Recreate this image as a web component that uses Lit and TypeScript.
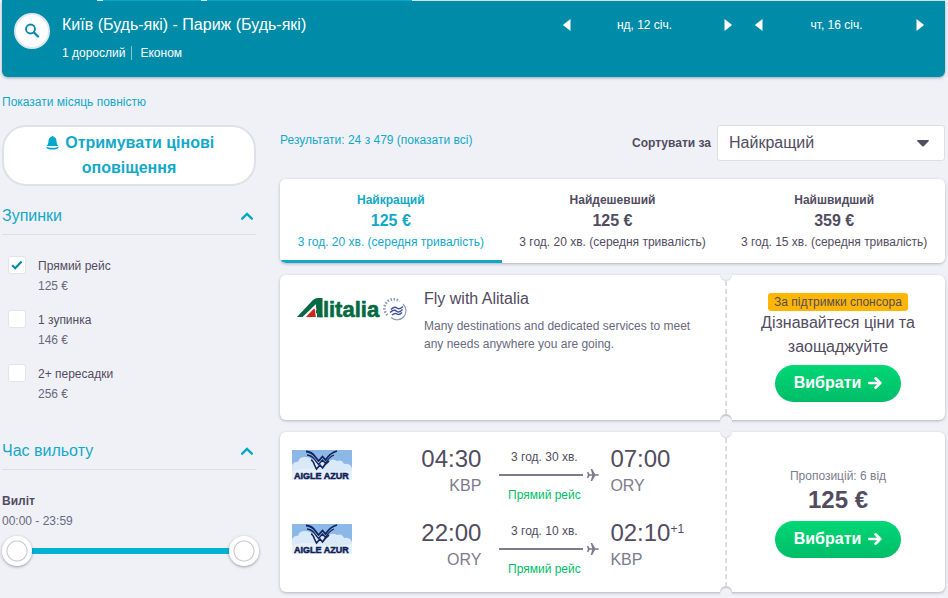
import { LitElement, html, css, svg } from "lit";
import { customElement, property, state } from "lit/decorators.js";
import { classMap } from "lit/directives/class-map.js";

const base = css`
  :host {
    display: block;
    box-sizing: border-box;
    font-family: "Liberation Sans", Arial, sans-serif;
    font-size: 12px;
    line-height: 20px;
    color: #524c61;
  }
  *,
  *::before,
  *::after {
    box-sizing: border-box;
  }
  h1,
  h2,
  h3,
  p {
    margin: 0;
    font-weight: normal;
  }
  button {
    font: inherit;
    color: inherit;
    margin: 0;
    padding: 0;
    border: 0;
    background: none;
    cursor: pointer;
  }
  a {
    color: #12a9c9;
    text-decoration: none;
  }
  svg {
    display: block;
  }
`;

@customElement("date-stepper")
class DateStepper extends LitElement {
  @property() label = "";

  static styles = [
    base,
    css`
      :host {
        flex: 0 1 181px;
        color: #fff;
      }
      .row {
        display: flex;
        align-items: center;
        justify-content: space-between;
      }
      .date {
        padding-right: 6px;
      }
      .step {
        display: grid;
        place-items: center;
        width: 20px;
        height: 20px;
      }
    `,
  ];

  render() {
    return html`<div class="row">
      <button class="step" aria-label="Попередній день">
        <svg width="8" height="12" viewBox="0 0 8 12" fill="#fff"><path d="M7.5 0v12L.5 6.600q-.6-.6 0-1.200z" /></svg>
      </button>
      <span class="date">${this.label}</span>
      <button class="step" aria-label="Наступний день">
        <svg width="8" height="12" viewBox="0 0 8 12" fill="#fff"><path d="M.5 0v12l7-5.400q.6-.6 0-1.200z" /></svg>
      </button>
    </div>`;
  }
}

@customElement("search-header")
class SearchHeader extends LitElement {
  static styles = [
    base,
    css`
      :host {
        color: #fff;
      }
      .strip {
        display: flex;
        gap: 6px;
        height: 1px;
        background: #d5eff4;
      }
      .tab {
        background: #00a9c6;
      }
      .tab.current {
        background: #008ca8;
        width: 95px;
      }
      .tab.short {
        width: 98px;
      }
      .tab.long {
        width: 205px;
      }
      .bar {
        display: flex;
        align-items: flex-start;
        min-height: 76px;
        padding: 12px 15px 12px 12px;
        border-radius: 0 0 6px 6px;
        background: #008ca8;
        box-shadow: 0 1px 3px rgba(0, 60, 80, 0.4);
      }
      .search {
        display: grid;
        place-items: center;
        flex: none;
        width: 36px;
        height: 36px;
        border: 2px solid #dfe6ee;
        border-radius: 50%;
        background: #fff;
      }
      .summary {
        flex: 1;
        min-width: 0;
        padding-left: 12px;
      }
      h1 {
        font-size: 16px;
        line-height: 24px;
      }
      .details {
        display: flex;
        margin-top: 9px;
        line-height: 14px;
      }
      .details span + span {
        margin-left: 6px;
        padding-left: 8px;
        border-left: 1px solid #7fc5d3;
      }
      .dates {
        display: flex;
        flex: 0 1 373px;
        gap: 11px;
        padding-top: 2px;
      }
    `,
  ];

  render() {
    return html`
      <div class="strip">
        <div class="tab current"></div>
        <div class="tab short"></div>
        <div class="tab long"></div>
      </div>
      <header class="bar">
        <button class="search" aria-label="Шукати">
          <svg width="16" height="16" viewBox="0 0 16 16" fill="none" stroke="#008ca8">
            <circle cx="6.500" cy="6" r="4.500" stroke-width="1.800" />
            <path d="M10 9.500l4 4" stroke-width="2.400" stroke-linecap="round" />
          </svg>
        </button>
        <div class="summary">
          <h1>Київ (Будь-які) - Париж (Будь-які)</h1>
          <div class="details"><span>1 дорослий</span><span>Економ</span></div>
        </div>
        <div class="dates">
          <date-stepper label="нд, 12 січ."></date-stepper>
          <date-stepper label="чт, 16 січ."></date-stepper>
        </div>
      </header>
    `;
  }
}

@customElement("filter-section")
class FilterSection extends LitElement {
  @property() heading = "";
  @state() private open = true;

  static styles = [
    base,
    css`
      .toggle {
        display: flex;
        align-items: center;
        justify-content: space-between;
        width: 100%;
        padding: 0 3px 6px 0;
        border-bottom: 1px solid #dddde5;
        font-size: 16px;
        line-height: 24px;
        color: #12a9c9;
        text-align: left;
      }
      .closed svg {
        transform: rotate(180deg);
      }
    `,
  ];

  render() {
    return html`
      <h2>
        <button
          class=${classMap({ toggle: true, closed: !this.open })}
          aria-expanded=${this.open}
          @click=${() => (this.open = !this.open)}
        >
          ${this.heading}
          <svg width="12" height="8" viewBox="0 0 12 8" fill="none" stroke="#00a9c9" stroke-width="2.400">
            <path d="M1.200 6.700L6 2l4.800 4.700" stroke-linecap="round" />
          </svg>
        </button>
      </h2>
      ${this.open ? html`<slot></slot>` : ""}
    `;
  }
}

const stops = [
  { id: "direct", label: "Прямий рейс", price: "125 €", checked: true },
  { id: "one", label: "1 зупинка", price: "146 €", checked: false },
  { id: "more", label: "2+ пересадки", price: "256 €", checked: false },
];

@customElement("filter-panel")
class FilterPanel extends LitElement {
  static styles = [
    base,
    css`
      .alert {
        width: 100%;
        padding: 3px 24px 4px;
        border: 2px solid #e0e0e9;
        border-radius: 24px;
        background: #fff;
        font-size: 16px;
        font-weight: bold;
        line-height: 25px;
        color: #12a9c9;
      }
      .alert svg {
        display: inline-block;
        vertical-align: -2px;
        margin: 0 2px;
      }
      .stops {
        margin-top: 18px;
      }
      .times {
        margin-top: 35px;
      }
      .options {
        display: grid;
        gap: 14px;
        padding: 21px 0 0 6px;
      }
      .option {
        display: grid;
        grid-template-columns: 18px 1fr;
        column-gap: 12px;
      }
      .box {
        display: grid;
        place-items: center;
        width: 18px;
        height: 18px;
      }
      .box > * {
        grid-area: 1 / 1;
      }
      .box input {
        appearance: none;
        width: 18px;
        height: 18px;
        margin: 0;
        border: 1px solid #e2e2ea;
        border-radius: 3px;
        background: #fff;
      }
      .box svg {
        visibility: hidden;
        pointer-events: none;
        z-index: 1;
      }
      .box input:checked + svg {
        visibility: visible;
      }
      .price,
      .hours {
        color: #68697f;
      }
      h3 {
        padding-top: 21px;
        font-size: 12px;
        font-weight: bold;
      }
      .slider {
        position: relative;
        display: grid;
        align-items: center;
        height: 30px;
        margin: 5px -3px 0 0;
      }
      .track {
        height: 6px;
        margin: 0 15px;
        background: #00b2d6;
      }
      .slider input {
        position: absolute;
        inset: 0;
        appearance: none;
        width: 100%;
        height: 30px;
        margin: 0;
        background: none;
        pointer-events: none;
      }
      .slider input::-webkit-slider-thumb {
        appearance: none;
        width: 30px;
        height: 30px;
        border-radius: 50%;
        background: radial-gradient(circle, #fff 9px, #c4c4cf 10px, #fff 11px);
        box-shadow: 0 1px 3px rgba(60, 60, 80, 0.5);
        pointer-events: auto;
      }
    `,
  ];

  render() {
    return html`
      <button class="alert">
        <svg width="13" height="14" viewBox="0 0 13 14" fill="#00a9c9">
          <path
            d="M6.500 0q.9 0 1.100.8C9.800 1.400 10.500 3.200 10.500 5.200q0 3.200 1.900 4.800H.6Q2.500 8.400 2.500 5.200C2.500 3.200 3.200 1.400 5.400.8Q5.600 0 6.500 0z"
          />
          <path
            d="M.6 10.600c-.8 1.800 2.200 3 5.900 3s6.700-1.200 5.900-3c-.8.900-3 1.200-5.900 1.200s-5.100-.3-5.900-1.200z"
          /></svg
        >
        Отримувати цінові оповіщення
      </button>
      <filter-section class="stops" heading="Зупинки">
        <div class="options">
          ${stops.map(
            (s) => html`<div class="option">
              <span class="box">
                <input type="checkbox" id=${s.id} .checked=${s.checked} />
                <svg width="12" height="10" viewBox="0 0 12 10" fill="none" stroke="#008ca8" stroke-width="2.200">
                  <path d="M1.200 5.200l3 3L10.600 1.400" />
                </svg>
              </span>
              <label for=${s.id}>
                <div>${s.label}</div>
                <div class="price">${s.price}</div>
              </label>
            </div>`
          )}
        </div>
      </filter-section>
      <filter-section class="times" heading="Час вильоту">
        <h3>Виліт</h3>
        <p class="hours">00:00 - 23:59</p>
        <div class="slider">
          <div class="track"></div>
          <input type="range" min="0" max="1439" value="0" aria-label="Виліт від" />
          <input type="range" min="0" max="1439" value="1439" aria-label="Виліт до" />
        </div>
      </filter-section>
    `;
  }
}

const tabs = [
  { name: "Найкращий", price: "125 €", time: "3 год. 20 хв. (середня тривалість)" },
  { name: "Найдешевший", price: "125 €", time: "3 год. 20 хв. (середня тривалість)" },
  { name: "Найшвидший", price: "359 €", time: "3 год. 15 хв. (середня тривалість)" },
];

@customElement("sort-tabs")
class SortTabs extends LitElement {
  @state() private selected = 0;

  static styles = [
    base,
    css`
      :host {
        border-radius: 6px;
        box-shadow: 0 1px 3px rgba(60, 60, 80, 0.35);
      }
      .tabs {
        display: grid;
        grid-template-columns: repeat(3, 1fr);
        overflow: hidden;
        border-radius: 6px;
        background: #fff;
      }
      .tab {
        padding: 11px 0 8px;
        border-bottom: 3px solid transparent;
      }
      .tab.selected {
        border-bottom-color: #12a9c9;
        color: #12a9c9;
      }
      .tab span {
        display: block;
      }
      .name {
        font-weight: bold;
      }
      .price {
        font-size: 16px;
        font-weight: bold;
        line-height: 22px;
      }
    `,
  ];

  render() {
    return html`<div class="tabs" role="tablist">
      ${tabs.map(
        (t, i) => html`<button
          role="tab"
          aria-selected=${i === this.selected}
          class=${classMap({ tab: true, selected: i === this.selected })}
          @click=${() => (this.selected = i)}
        >
          <span class="name">${t.name}</span>
          <span class="price">${t.price}</span>
          <span>${t.time}</span>
        </button>`
      )}
    </div>`;
  }
}

@customElement("ticket-card")
class TicketCard extends LitElement {
  static styles = [
    base,
    css`
      .card {
        position: relative;
        display: grid;
        grid-template-columns: 1fr 219px;
        border-radius: 6px;
        background: #fff;
        box-shadow: 0 1px 3px rgba(60, 60, 80, 0.35);
      }
      .side {
        position: relative;
        display: flex;
        flex-direction: column;
        align-items: center;
        justify-content: center;
        padding: 18px 10px 18px 15px;
        text-align: center;
      }
      .side::before {
        content: "";
        position: absolute;
        left: -1px;
        top: 6px;
        bottom: 6px;
        width: 2px;
        background: repeating-linear-gradient(#dddde3 0 5px, transparent 5px 8px);
      }
      .notch {
        position: absolute;
        left: -6px;
        width: 12px;
        height: 7px;
        background: #f0f1f7;
      }
      .notch.top {
        top: -1px;
        border-radius: 0 0 6px 6px;
        box-shadow: inset 0 -1px 1px #dddde5;
      }
      .notch.bottom {
        bottom: -3px;
        height: 9px;
        border-radius: 6px 6px 0 0;
        box-shadow: inset 0 2px 1px #cbcbd4;
      }
      .pick {
        display: flex;
        align-items: center;
        justify-content: center;
        gap: 7px;
        width: 126px;
        height: 37px;
        padding-bottom: 2px;
        border-radius: 19px;
        background: linear-gradient(#00d775, #00bd68);
        font-size: 16px;
        font-weight: bold;
        color: #fff;
      }
    `,
  ];

  render() {
    return html`<article class="card">
      <div><slot></slot></div>
      <div class="side">
        <span class="notch top"></span>
        <span class="notch bottom"></span>
        <slot name="offer"></slot>
        <button class="pick">
          Вибрати
          <svg width="14" height="12" viewBox="0 0 14 12" fill="none" stroke="#fff" stroke-width="2.600">
            <path d="M1.300 6h10.500M7.500 1.300L12.300 6 7.500 10.700" stroke-linecap="round" stroke-linejoin="round" />
          </svg>
        </button>
      </div>
    </article>`;
  }
}

const alitaliaLogo = svg`
  <svg width="110" height="24" viewBox="0 0 110 24" role="img" aria-label="Alitalia SkyTeam">
    <text x="10" y="20" font-size="22" font-weight="bold" fill="#046a43" stroke="#046a43" stroke-width=".6"
      font-family="Liberation Sans">Alitalia</text>
    <path d="M5 20.500L19 5.500V20.500z" fill="#fff" />
    <path d="M0 20L16 3Q18 1 21 1H25.500V20.300H20V7L18.500 7.500L5.500 20z" fill="#046a43" />
    <path d="M9 20L16 12.500Q17.500 11 18 13L18.800 20z" fill="#c8281e" />
    <g fill="none" stroke="#8d97bd">
      <path d="M106 7a9 9 0 0 1-12 13.500" stroke-width="1.200" />
      <path d="M90.500 18a9 9 0 0 1 12-13.500" stroke-width="2.600" stroke-dasharray="1.500 1.600" />
      <path d="M94 12.500q3.500-3.500 6 -1.500t6-1.500M93 15.500q4-3.500 6.500-1.300t6-1.700M95 18q3-2.500 5-1t5-1.500" stroke="#41529a" stroke-width="1.500" />
    </g>
  </svg>`;

const aigleAzurLogo = svg`
  <svg width="60" height="32" viewBox="0 0 60 32" role="img" aria-label="Aigle Azur">
    <rect width="60" height="30" fill="#8cb8e8" />
    <path d="M0 15q3-4 6-3 1-5 7-5 5 0 7 3 5-2 8 2h8q4-4 9-1 5-2 7 3 6-1 8 4v12H0z" fill="#d9e9f7" />
    <path d="M0 21q14-4 28-1t32 0v10H0z" fill="#e6f0f9" />
    <g fill="none" stroke="#14245c">
      <path d="M14 1.500q6 .5 9 5l3.500 4.500 4-4.500 3 3.500Q38 3 45 1" stroke-width="1.800" />
      <path d="M15 5q5 .5 8 5l3.500 4.500 4-4.500 3 3.500Q37 7 42 5" stroke-width="1.300" />
      <path d="M19 10q2 .5 3.500 5l2 4 3.500-4 2.500 3Q33 14 37 11" stroke-width="1.600" />
    </g>
    <text x="2" y="29" font-size="9" font-weight="bold" fill="#101f58" stroke="#101f58" stroke-width=".5"
      font-family="Liberation Sans">AIGLE AZUR</text>
  </svg>`;

const legs = [
  { from: "KBP", depart: "04:30", length: "3 год. 30 хв.", to: "ORY", arrive: "07:00", shift: "" },
  { from: "ORY", depart: "22:00", length: "3 год. 10 хв.", to: "KBP", arrive: "02:10", shift: "+1" },
];

@customElement("app-root")
class AppRoot extends LitElement {
  static styles = [
    base,
    css`
      :host {
        min-height: 100vh;
        padding: 0 3px 6px 2px;
        background: #f0f1f7;
      }
      .month {
        display: block;
        padding: 15px 0 13px;
      }
      .layout {
        display: grid;
        grid-template-columns: 254px 1fr;
        gap: 24px;
        align-items: start;
      }
      .toolbar {
        display: flex;
        align-items: center;
        margin-bottom: 18px;
      }
      .found {
        flex: 1;
        padding-bottom: 6px;
      }
      .toolbar label {
        margin-right: 6px;
        font-weight: bold;
      }
      .select {
        display: grid;
        align-items: center;
        flex: 0 1 228px;
      }
      .select > * {
        grid-area: 1 / 1;
      }
      .select select {
        appearance: none;
        height: 36px;
        padding: 0 36px 0 11px;
        border: 1px solid #dddde5;
        border-radius: 3px;
        background: #fff;
        font: inherit;
        font-size: 16px;
        color: #524c61;
      }
      .select svg {
        justify-self: end;
        margin-right: 16px;
        pointer-events: none;
      }
      .results {
        display: grid;
        gap: 12px;
      }
      .ad {
        display: grid;
        grid-template-columns: 110px 1fr;
        gap: 17px;
        padding: 12px 24px 62px 17px;
      }
      .ad svg {
        margin-top: 10px;
      }
      .ad h2 {
        font-size: 16px;
        line-height: 24px;
      }
      .ad p {
        max-width: 280px;
        margin-top: 6px;
        line-height: 18px;
        color: #68697f;
      }
      .badge {
        padding: 0 6px;
        border-radius: 3px;
        background: #ffb600;
        line-height: 18px;
      }
      .pitch {
        margin-bottom: 6px;
        font-size: 16px;
        line-height: 24px;
      }
      .legs {
        display: grid;
        gap: 10px;
        padding: 12px 12px 10px;
      }
      .leg {
        display: grid;
        grid-template-columns: 60px 9fr 100px 7fr;
        align-items: start;
      }
      .leg > svg {
        margin-top: 6px;
      }
      .stop {
        padding: 0 11px;
        color: #7d7b8c;
        font-size: 16px;
        line-height: 24px;
      }
      .stop.from {
        padding-right: 18px;
        text-align: right;
      }
      .time {
        display: block;
        font-size: 24px;
        line-height: 30px;
        color: #524c61;
      }
      sup {
        font-size: 12px;
        line-height: 12px;
        vertical-align: 8px;
      }
      .route {
        height: 64px;
        padding-top: 3px;
        text-align: center;
      }
      .route p {
        padding-right: 10px;
      }
      .line {
        display: flex;
        align-items: center;
        gap: 4px;
        margin: 2px 0 1px;
      }
      .line::before {
        content: "";
        flex: 1;
        height: 2px;
        background: #7d7b8c;
      }
      .direct {
        color: #00bd68;
        margin-top: 4px;
      }
      .deals {
        color: #7d7b8c;
      }
      .total {
        margin-bottom: 7px;
        font-size: 24px;
        font-weight: bold;
        line-height: 28px;
      }
    `,
  ];

  render() {
    return html`
      <search-header></search-header>
      <a class="month" href="#month">Показати місяць повністю</a>
      <div class="layout">
        <filter-panel></filter-panel>
        <main>
          <div class="toolbar">
            <div class="found"><a href="#all">Результати: 24 з 479 (показати всі)</a></div>
            <label for="sort">Сортувати за</label>
            <div class="select">
              <select id="sort">
                ${tabs.map((t) => html`<option>${t.name}</option>`)}
              </select>
              <svg width="12" height="7" viewBox="0 0 12 7" fill="#524c61">
                <path d="M.8 0h10.400q1.200.3.400 1.200L7 6q-1 1-2 0L.4 1.200Q-.4.3.8 0z" />
              </svg>
            </div>
          </div>
          <div class="results">
            <sort-tabs></sort-tabs>
            <ticket-card>
              <div class="ad">
                ${alitaliaLogo}
                <div>
                  <h2>Fly with Alitalia</h2>
                  <p>Many destinations and dedicated services to meet any needs anywhere you are going.</p>
                </div>
              </div>
              <span class="badge" slot="offer">За підтримки спонсора</span>
              <p class="pitch" slot="offer">Дізнавайтеся ціни та заощаджуйте</p>
            </ticket-card>
            <ticket-card>
              <div class="legs">
                ${legs.map(
                  (l) => html`<div class="leg">
                    ${aigleAzurLogo}
                    <div class="stop from"><span class="time">${l.depart}</span>${l.from}</div>
                    <div class="route">
                      <p>${l.length}</p>
                      <div class="line">
                        <svg width="12" height="12" viewBox="0 0 12 12" fill="#7d7b8c">
                          <path
                            d="M0 3h1.300l1.400 2.200h2.500L3.700 0h1.500l3 5.200h2.600q1.200.3 1.200.8t-1.200.8H8.200l-3 5.200H3.700l1.500-5.200H2.700L1.300 9H0l.8-3z"
                          />
                        </svg>
                      </div>
                      <p class="direct">Прямий рейс</p>
                    </div>
                    <div class="stop">
                      <span class="time">${l.arrive}${l.shift ? html`<sup>${l.shift}</sup>` : ""}</span>${l.to}
                    </div>
                  </div>`
                )}
              </div>
              <p class="deals" slot="offer">Пропозицій: 6 від</p>
              <p class="total" slot="offer">125 €</p>
            </ticket-card>
          </div>
        </main>
      </div>
    `;
  }
}
